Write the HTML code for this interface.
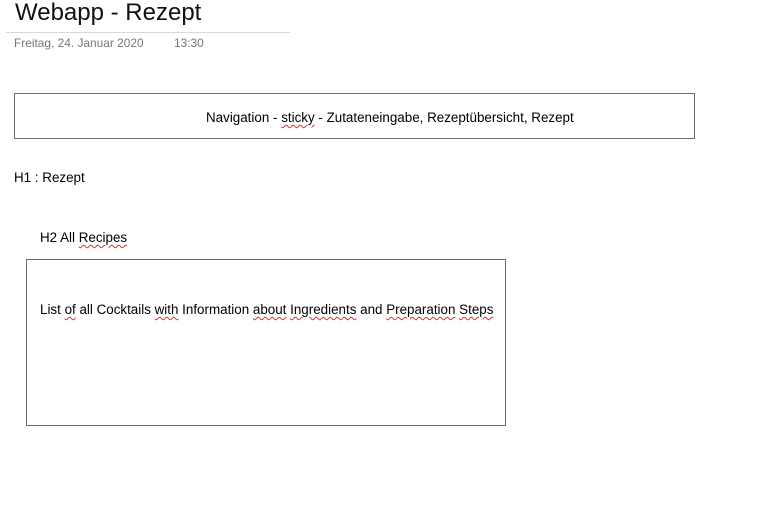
<!DOCTYPE html>
<html><head><meta charset="utf-8"><style>
body{margin:0;width:759px;height:519px;background:#fff;font-family:"Liberation Sans",sans-serif;color:#000;position:relative;overflow:hidden}
.a{position:absolute;white-space:nowrap}
.s{text-decoration:underline wavy #e03030;text-decoration-thickness:1px;text-underline-offset:2px}
.t{font-size:13.4px}
</style></head><body>
<div class="a" style="left:15px;top:-1px;font-size:24px;font-weight:normal;color:#111">Webapp - Rezept</div>
<div class="a" style="left:6px;top:32px;width:284px;height:1px;background:#d8d8d8"></div>
<div class="a" style="left:14px;top:36px;font-size:11.9px;color:#777">Freitag, 24. Januar 2020</div>
<div class="a" style="left:174px;top:36px;font-size:11.9px;color:#777">13:30</div>
<div class="a" style="left:14px;top:93px;width:679px;height:44px;border:1.5px solid #6e6e6e"></div>
<div class="a t" style="left:206px;top:110px">Navigation - <span class="s">sticky</span> - Zutateneingabe, Rezeptübersicht, Rezept</div>
<div class="a t" style="left:14px;top:170px">H1 : Rezept</div>
<div class="a t" style="left:40px;top:230px">H2 All <span class="s">Recipes</span></div>
<div class="a" style="left:26px;top:259px;width:478px;height:165px;border:1.5px solid #6e6e6e"></div>
<div class="a t" style="left:40px;top:302px">List <span class="s">of</span> all Cocktails <span class="s">with</span> Information <span class="s">about</span> <span class="s">Ingredients</span> and <span class="s">Preparation</span> <span class="s">Steps</span></div>
</body></html>
